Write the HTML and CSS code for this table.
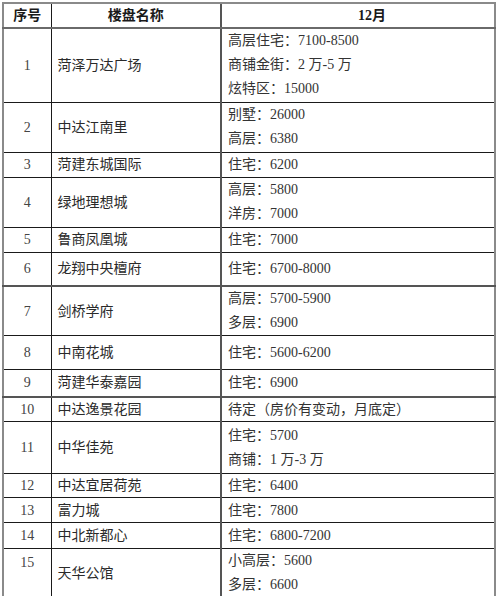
FILE: index.html
```html
<!DOCTYPE html>
<html lang="zh">
<head>
<meta charset="utf-8">
<title>楼盘价格</title>
<link rel="stylesheet" href="styles.css">
</head>
<body>
<table class="price">
  <colgroup>
    <col class="c-no">
    <col class="c-name">
    <col class="c-price">
  </colgroup>
  <thead>
    <tr class="h25 head">
      <th>序号</th>
      <th>楼盘名称</th>
      <th class="month">12月</th>
    </tr>
  </thead>
  <tbody>
    <tr class="h74">
      <td class="no">1</td>
      <td class="name">菏泽万达广场</td>
      <td class="val"><div>高层住宅：7100-8500</div><div>商铺金街：2 万-5 万</div><div>炫特区：15000</div></td>
    </tr>
    <tr class="h50">
      <td class="no">2</td>
      <td class="name">中达江南里</td>
      <td class="val"><div>别墅：26000</div><div>高层：6380</div></td>
    </tr>
    <tr class="h25">
      <td class="no">3</td>
      <td class="name">菏建东城国际</td>
      <td class="val">住宅：6200</td>
    </tr>
    <tr class="h50">
      <td class="no">4</td>
      <td class="name">绿地理想城</td>
      <td class="val"><div>高层：5800</div><div>洋房：7000</div></td>
    </tr>
    <tr class="h25">
      <td class="no">5</td>
      <td class="name">鲁商凤凰城</td>
      <td class="val">住宅：7000</td>
    </tr>
    <tr class="h34 thick">
      <td class="no">6</td>
      <td class="name">龙翔中央檀府</td>
      <td class="val">住宅：6700-8000</td>
    </tr>
    <tr class="h48">
      <td class="no">7</td>
      <td class="name">剑桥学府</td>
      <td class="val"><div>高层：5700-5900</div><div>多层：6900</div></td>
    </tr>
    <tr class="h34">
      <td class="no">8</td>
      <td class="name">中南花城</td>
      <td class="val">住宅：5600-6200</td>
    </tr>
    <tr class="h27 thick">
      <td class="no">9</td>
      <td class="name">菏建华泰嘉园</td>
      <td class="val">住宅：6900</td>
    </tr>
    <tr class="h25">
      <td class="no">10</td>
      <td class="name">中达逸景花园</td>
      <td class="val">待定（房价有变动，月底定）</td>
    </tr>
    <tr class="h52">
      <td class="no">11</td>
      <td class="name">中华佳苑</td>
      <td class="val"><div>住宅：5700</div><div>商铺：1 万-3 万</div></td>
    </tr>
    <tr class="h23">
      <td class="no">12</td>
      <td class="name">中达宜居荷苑</td>
      <td class="val">住宅：6400</td>
    </tr>
    <tr class="h25">
      <td class="no">13</td>
      <td class="name">富力城</td>
      <td class="val">住宅：7800</td>
    </tr>
    <tr class="h26">
      <td class="no">14</td>
      <td class="name">中北新都心</td>
      <td class="val">住宅：6800-7200</td>
    </tr>
    <tr class="h45 last">
      <td class="no top">15</td>
      <td class="name">天华公馆</td>
      <td class="val"><div>小高层：5600</div><div>多层：6600</div></td>
    </tr>
  </tbody>
</table>
</body>
</html>
```
FILE: styles.css
```css
html, body {
  margin: 0;
  padding: 0;
  background: #ffffff;
}

body {
  font-family: "Liberation Serif", "Noto Sans CJK SC", serif;
  font-size: 14px;
  color: #2a2a2a;
}

.price {
  margin: 2px 0 0 2px;
  width: 494px;
  border-collapse: collapse;
  table-layout: fixed;
  border: 2px solid #8a8a8a;
}

.c-no { width: 48px; }
.c-name { width: 170px; }

.price th,
.price td {
  border: 1px solid #1a1a1a;
  padding: 0 6px;
  vertical-align: middle;
  line-height: 23px;
}

.price td.val div {
  line-height: 24px;
}

.price th {
  font-weight: bold;
  color: #1a1a1a;
  text-align: center;
  line-height: 20px;
  border-bottom: 2px solid #6a6a6a;
  border-top: 2px solid #8a8a8a;
}

.price th.month {
  padding-left: 34px;
}

.price td:first-child,
.price th:first-child {
  border-left: 2px solid #8a8a8a;
}

.price td:last-child,
.price th:last-child {
  border-right: 2px solid #8a8a8a;
}

.price td.val,
.price th.month {
  border-left: 2px solid #555555;
}

.price tr.last td {
  border-bottom: 2px solid #8a8a8a;
}

.price tr.thick td {
  border-bottom: 2px solid #555555;
}

.no {
  text-align: center;
  color: #444444;
}

.no.top {
  vertical-align: top;
  padding-top: 2px;
}

.name {
  color: #2a2a2a;
}

.val {
  color: #333333;
}

.h23 { height: 23px; }
.h25 { height: 25px; }
.h26 { height: 26px; }
.h27 { height: 27px; }
.h34 { height: 34px; }
.h45 { height: 45px; }
.h48 { height: 48px; }
.h50 { height: 50px; }
.h52 { height: 52px; }
.h74 { height: 74px; }
```
